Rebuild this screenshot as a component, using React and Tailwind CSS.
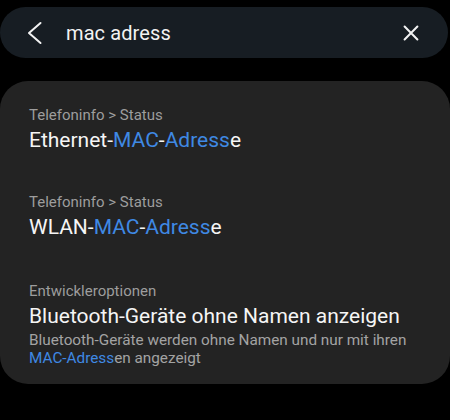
import React from "react";

// Highlighted search match
function Hl({ children }) {
  return <span className="text-[#3f89e4]">{children}</span>;
}

function ResultItem({ path, title, desc, first, last }) {
  const pad = first ? "pt-[24px] pb-[18px]" : last ? "pt-[20px] pb-[17px]" : "pt-[21px] pb-[21px]";
  return (
    <div className={pad}>
      <div className="text-[15px] leading-[20px] text-[#9d9d9d]">{path}</div>
      <div className="mt-[2px] text-[21px] leading-[26px] text-[#f5f5f5]">{title}</div>
      {desc && (
        <div className="mt-[2px] text-[15.3px] leading-[18px] text-[#a3a3a3]">{desc}</div>
      )}
    </div>
  );
}

export default function App() {
  return (
    <div
      className="w-[450px] h-[420px] bg-black overflow-hidden"
      style={{ fontFamily: "Roboto, 'Noto Sans', sans-serif" }}
    >
      {/* search bar */}
      <div className="pt-[7px] pr-[2px]">
        <div className="h-[51px] rounded-full bg-[#171d23] flex items-center">
          <svg
            width="24"
            height="24"
            viewBox="0 0 24 24"
            className="ml-[22px] text-[#f2f2f2]"
            fill="none"
            stroke="currentColor"
            strokeWidth="2"
            strokeLinecap="round"
            strokeLinejoin="round"
          >
            <path d="M18.5 2 L7 12 L18.5 22" />
          </svg>
          <span className="ml-[20px] text-[20px] text-[#f2f2f2] tracking-[0.1px]">mac adress</span>
          <svg
            width="22"
            height="22"
            viewBox="0 0 24 24"
            className="ml-auto mr-[26px] text-[#f2f2f2]"
            fill="none"
            stroke="currentColor"
            strokeWidth="2.2"
            strokeLinecap="round"
          >
            <path d="M5 5 L19 19 M19 5 L5 19" />
          </svg>
        </div>
      </div>

      {/* results card */}
      <div className="mt-[23px] rounded-[28px] bg-[#232323] px-[29px]">
        <ResultItem
          first
          path="Telefoninfo > Status"
          title={
            <>
              Ethernet-<Hl>MAC</Hl>-<Hl>Adress</Hl>e
            </>
          }
        />
        <ResultItem
          path="Telefoninfo > Status"
          title={
            <>
              WLAN-<Hl>MAC</Hl>-<Hl>Adress</Hl>e
            </>
          }
        />
        <ResultItem
          last
          path="Entwickleroptionen"
          title="Bluetooth-Geräte ohne Namen anzeigen"
          desc={
            <>
              Bluetooth-Geräte werden ohne Namen und nur mit ihren
              <br />
              <Hl>MAC-Adress</Hl>en angezeigt
            </>
          }
        />
      </div>
    </div>
  );
}
